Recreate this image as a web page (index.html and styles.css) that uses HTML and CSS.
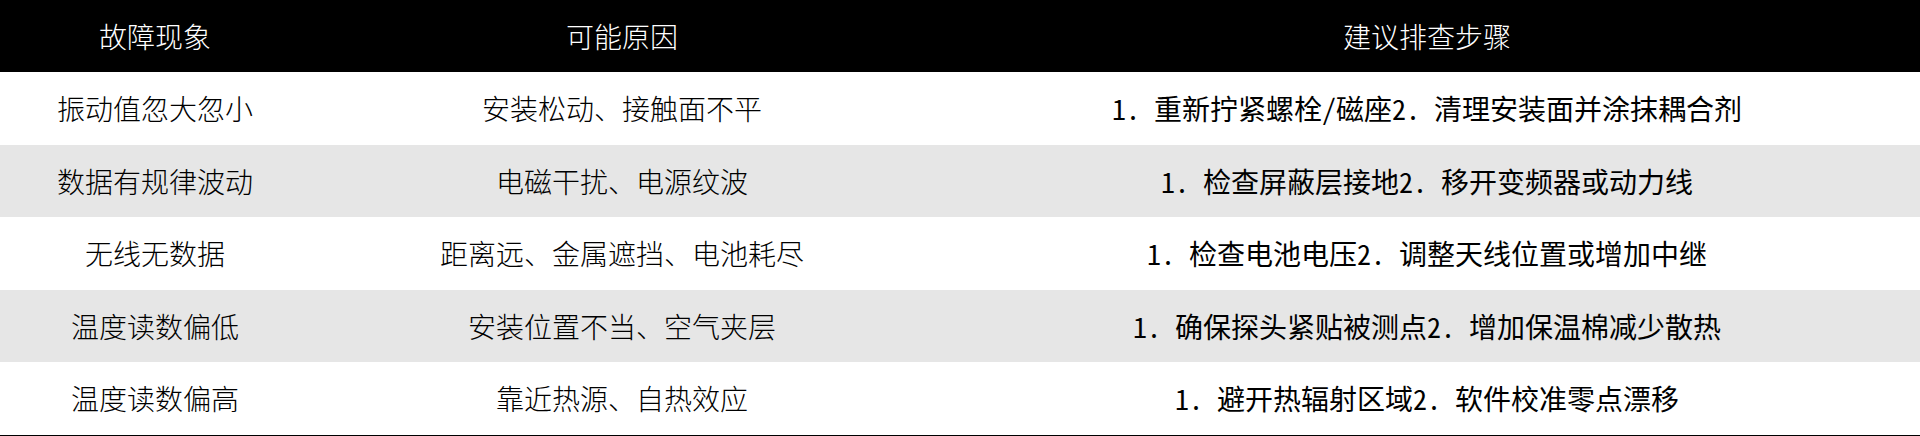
FILE: index.html
```html
<!DOCTYPE html>
<html lang="zh-CN">
<head>
<meta charset="utf-8">
<link rel="stylesheet" href="styles.css">
</head>
<body>
<table class="fault-table">
  <colgroup>
    <col class="c1">
    <col class="c2">
    <col class="c3">
  </colgroup>
  <thead>
    <tr><th>故障现象</th><th>可能原因</th><th>建议排查步骤</th></tr>
  </thead>
  <tbody>
    <tr><td>振动值忽大忽小</td><td>安装松动、接触面不平</td><td class="steps">1. 重新拧紧螺栓/磁座2. 清理安装面并涂抹耦合剂</td></tr>
    <tr><td>数据有规律波动</td><td>电磁干扰、电源纹波</td><td class="steps">1. 检查屏蔽层接地2. 移开变频器或动力线</td></tr>
    <tr><td>无线无数据</td><td>距离远、金属遮挡、电池耗尽</td><td class="steps">1. 检查电池电压2. 调整天线位置或增加中继</td></tr>
    <tr><td>温度读数偏低</td><td>安装位置不当、空气夹层</td><td class="steps">1. 确保探头紧贴被测点2. 增加保温棉减少散热</td></tr>
    <tr><td>温度读数偏高</td><td>靠近热源、自热效应</td><td class="steps">1. 避开热辐射区域2. 软件校准零点漂移</td></tr>
  </tbody>
</table>
</body>
</html>
```
FILE: styles.css
```css
html, body {
  margin: 0;
  padding: 0;
  background: #ffffff;
}
.fault-table {
  width: 1920px;
  border-collapse: collapse;
  table-layout: fixed;
  font-family: "Noto Sans CJK SC", "Noto Sans", sans-serif;
  font-size: 28px;
  font-weight: 300;
  border-bottom: 2px solid #000;
}
.c1 { width: 310px; }
.c2 { width: 624px; }
.c3 { width: 986px; }
.fault-table th {
  background: #000;
  color: #fff;
  font-weight: 300;
  height: 72px;
  padding: 0;
  text-align: center;
  vertical-align: middle;
}
.fault-table td {
  height: 72.5px;
  padding: 0;
  text-align: center;
  vertical-align: middle;
  color: #000;
  white-space: pre;
}
.fault-table td.steps {
  font-family: "Noto Sans Mono CJK SC", "Noto Sans CJK SC", "Liberation Mono", monospace;
}
.fault-table tbody tr:nth-child(even) td {
  background: #e6e6e6;
}
```
